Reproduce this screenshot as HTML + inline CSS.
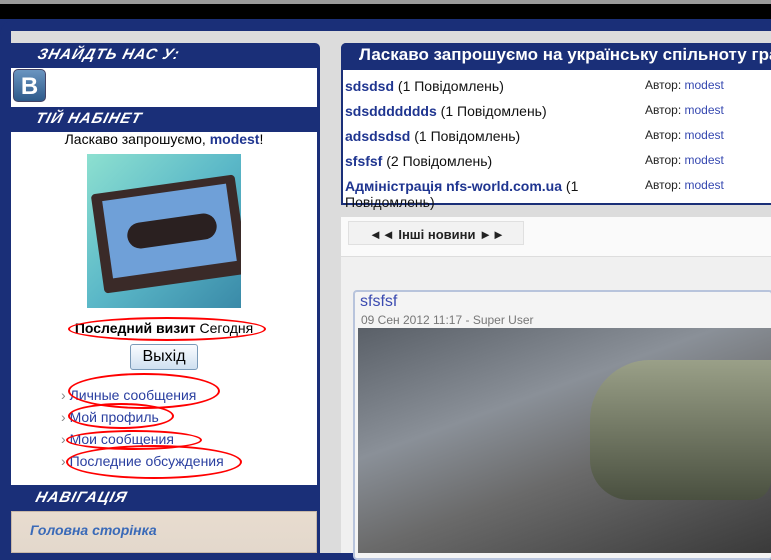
<!DOCTYPE html><html><head><meta charset="utf-8"><style>
body{margin:0;width:771px;height:553px;overflow:hidden;background:#1a2f78;font-family:"Liberation Sans",sans-serif;position:relative}
div{position:absolute;box-sizing:border-box}
.t{color:#fff;font-style:italic;font-weight:bold;letter-spacing:1px;font-size:15px;transform:skewX(-15deg)}
a{color:#2a3fa0;text-decoration:none}
.r{font-size:14px;color:#111;white-space:nowrap}
.r b{color:#1f3590}
.au{font-size:12px;color:#222;left:300px}
.au span{color:#3548b0}
.ov{border:2px solid #f00;border-radius:50%}
</style></head><body>
<div style="left:0;top:0;width:771px;height:5px;background:#9a9a9a"></div>
<div style="left:0;top:4px;width:771px;height:15px;background:#000"></div>
<div style="left:0;top:19px;width:771px;height:534px;background:#1a2f78;border-radius:16px 0 0 0"></div>
<div style="left:11px;top:31px;width:760px;height:522px;background:#dcdcdc"></div>
<div style="left:11px;top:43px;width:309px;height:510px;background:#1a2f78;border-radius:0 5px 0 0"></div>
<div class="t" style="left:38px;top:46px">ЗНАЙДТЬ НАС У:</div>
<div style="left:11px;top:68px;width:306px;height:39px;background:#fff"></div>
<div style="left:13px;top:69px;width:33px;height:33px;border-radius:5px;background:linear-gradient(#6a95c0,#2d5a8a);color:#fff;font-weight:bold;font-size:24px;text-align:center;line-height:33px;border:1px solid #446">B</div>
<div class="t" style="left:36px;top:110px">ТІЙ НАБІНЕТ</div>
<div style="left:11px;top:132px;width:306px;height:353px;background:#fff"></div>
<div style="left:11px;top:131px;width:306px;text-align:center;font-size:14px">Ласкаво запрошуємо, <b style="color:#1f3590">modest</b>!</div>
<div style="left:87px;top:154px;width:154px;height:154px;background:linear-gradient(135deg,#8de0d0,#5bb8c8 50%,#3a8aa8);overflow:hidden">
<div style="left:10px;top:30px;width:145px;height:100px;background:#3a2a28;transform:rotate(-8deg);border-radius:4px"></div>
<div style="left:20px;top:38px;width:125px;height:78px;background:#6fa0d8;transform:rotate(-8deg)"></div>
<div style="left:40px;top:64px;width:90px;height:26px;background:#2a2020;border-radius:13px;transform:rotate(-8deg)"></div></div>
<div style="left:11px;top:320px;width:306px;text-align:center;font-size:14px"><b>Последний визит</b> Сегодня</div>
<div class="ov" style="left:68px;top:317px;width:198px;height:24px"></div>
<div style="left:130px;top:344px;width:68px;height:26px;border:1px solid #7a9ab8;border-radius:3px;background:linear-gradient(#fafcff,#cfe0f0);text-align:center;font-size:16px;line-height:24px">Выхід</div>
<div style="left:61px;top:384px;font-size:14px;line-height:22px;color:#888">›&nbsp;<a>Личные сообщения</a><br>›&nbsp;<a>Мой профиль</a><br>›&nbsp;<a>Мои сообщения</a><br>›&nbsp;<a>Последние обсуждения</a></div>
<div class="ov" style="left:68px;top:373px;width:152px;height:36px"></div>
<div class="ov" style="left:68px;top:403px;width:106px;height:26px"></div>
<div class="ov" style="left:66px;top:430px;width:136px;height:20px"></div>
<div class="ov" style="left:66px;top:445px;width:176px;height:34px"></div>
<div class="t" style="left:36px;top:489px">НАВІГАЦІЯ</div>
<div style="left:11px;top:511px;width:306px;height:42px;background:linear-gradient(#e8dccf,#e3d8cc);border:1px solid #c8b8a8"></div>
<div style="left:30px;top:522px;font-size:14px;font-weight:bold;font-style:italic;color:#3a6ab8">Головна сторінка</div>
<div style="left:341px;top:43px;width:440px;height:162px;background:#fff;border:2px solid #1a2f78;border-radius:5px 0 0 0"></div>
<div style="left:341px;top:43px;width:430px;height:27px;background:#1a2f78;border-radius:5px 0 0 0"></div>
<div style="left:359px;top:45px;color:#fff;font-weight:bold;font-size:17px;white-space:nowrap">Ласкаво запрошуємо на українську спільноту гра</div>
<div style="left:345px;top:72px;width:420px">
<div class="r" style="top:6px"><b>sdsdsd</b> (1 Повідомлень)</div><div class="au" style="top:6px">Автор: <span>modest</span></div>
<div class="r" style="top:31px"><b>sdsddddddds</b> (1 Повідомлень)</div><div class="au" style="top:31px">Автор: <span>modest</span></div>
<div class="r" style="top:56px"><b>adsdsdsd</b> (1 Повідомлень)</div><div class="au" style="top:56px">Автор: <span>modest</span></div>
<div class="r" style="top:81px"><b>sfsfsf</b> (2 Повідомлень)</div><div class="au" style="top:81px">Автор: <span>modest</span></div>
<div class="r" style="top:106px;line-height:16px"><b>Адміністрація nfs-world.com.ua</b> (1<br>Повідомлень)</div><div class="au" style="top:106px">Автор: <span>modest</span></div>
</div>
<div style="left:341px;top:217px;width:430px;height:336px;background:#f0f0f0"></div>
<div style="left:341px;top:217px;width:430px;height:40px;background:#fafafa;border-bottom:1px solid #ddd"></div>
<div style="left:348px;top:221px;width:176px;height:24px;background:#f2f2f2;border:1px solid #e0e0e0;font-size:13px;font-weight:bold;color:#222;padding:5px 0 0 20px">◄◄ Інші новини ►►</div>
<div style="left:353px;top:290px;width:420px;height:270px;border:2px solid #b8c4dc;border-radius:4px;background:#f4f4f4"></div>
<div style="left:360px;top:293px;font-size:16px;color:#3a4ab0">sfsfsf</div>
<div style="left:361px;top:313px;font-size:12px;color:#777">09 Сен 2012 11:17 - Super User</div>
<div style="left:358px;top:328px;width:413px;height:225px;background:linear-gradient(160deg,#5a6068,#8a9098 35%,#6a6a6a 60%,#3a3a3a)"></div>
<div style="left:590px;top:360px;width:181px;height:140px;background:linear-gradient(#9aa088,#4a5040);border-radius:60px 0 20px 40px"></div>
</body></html>
